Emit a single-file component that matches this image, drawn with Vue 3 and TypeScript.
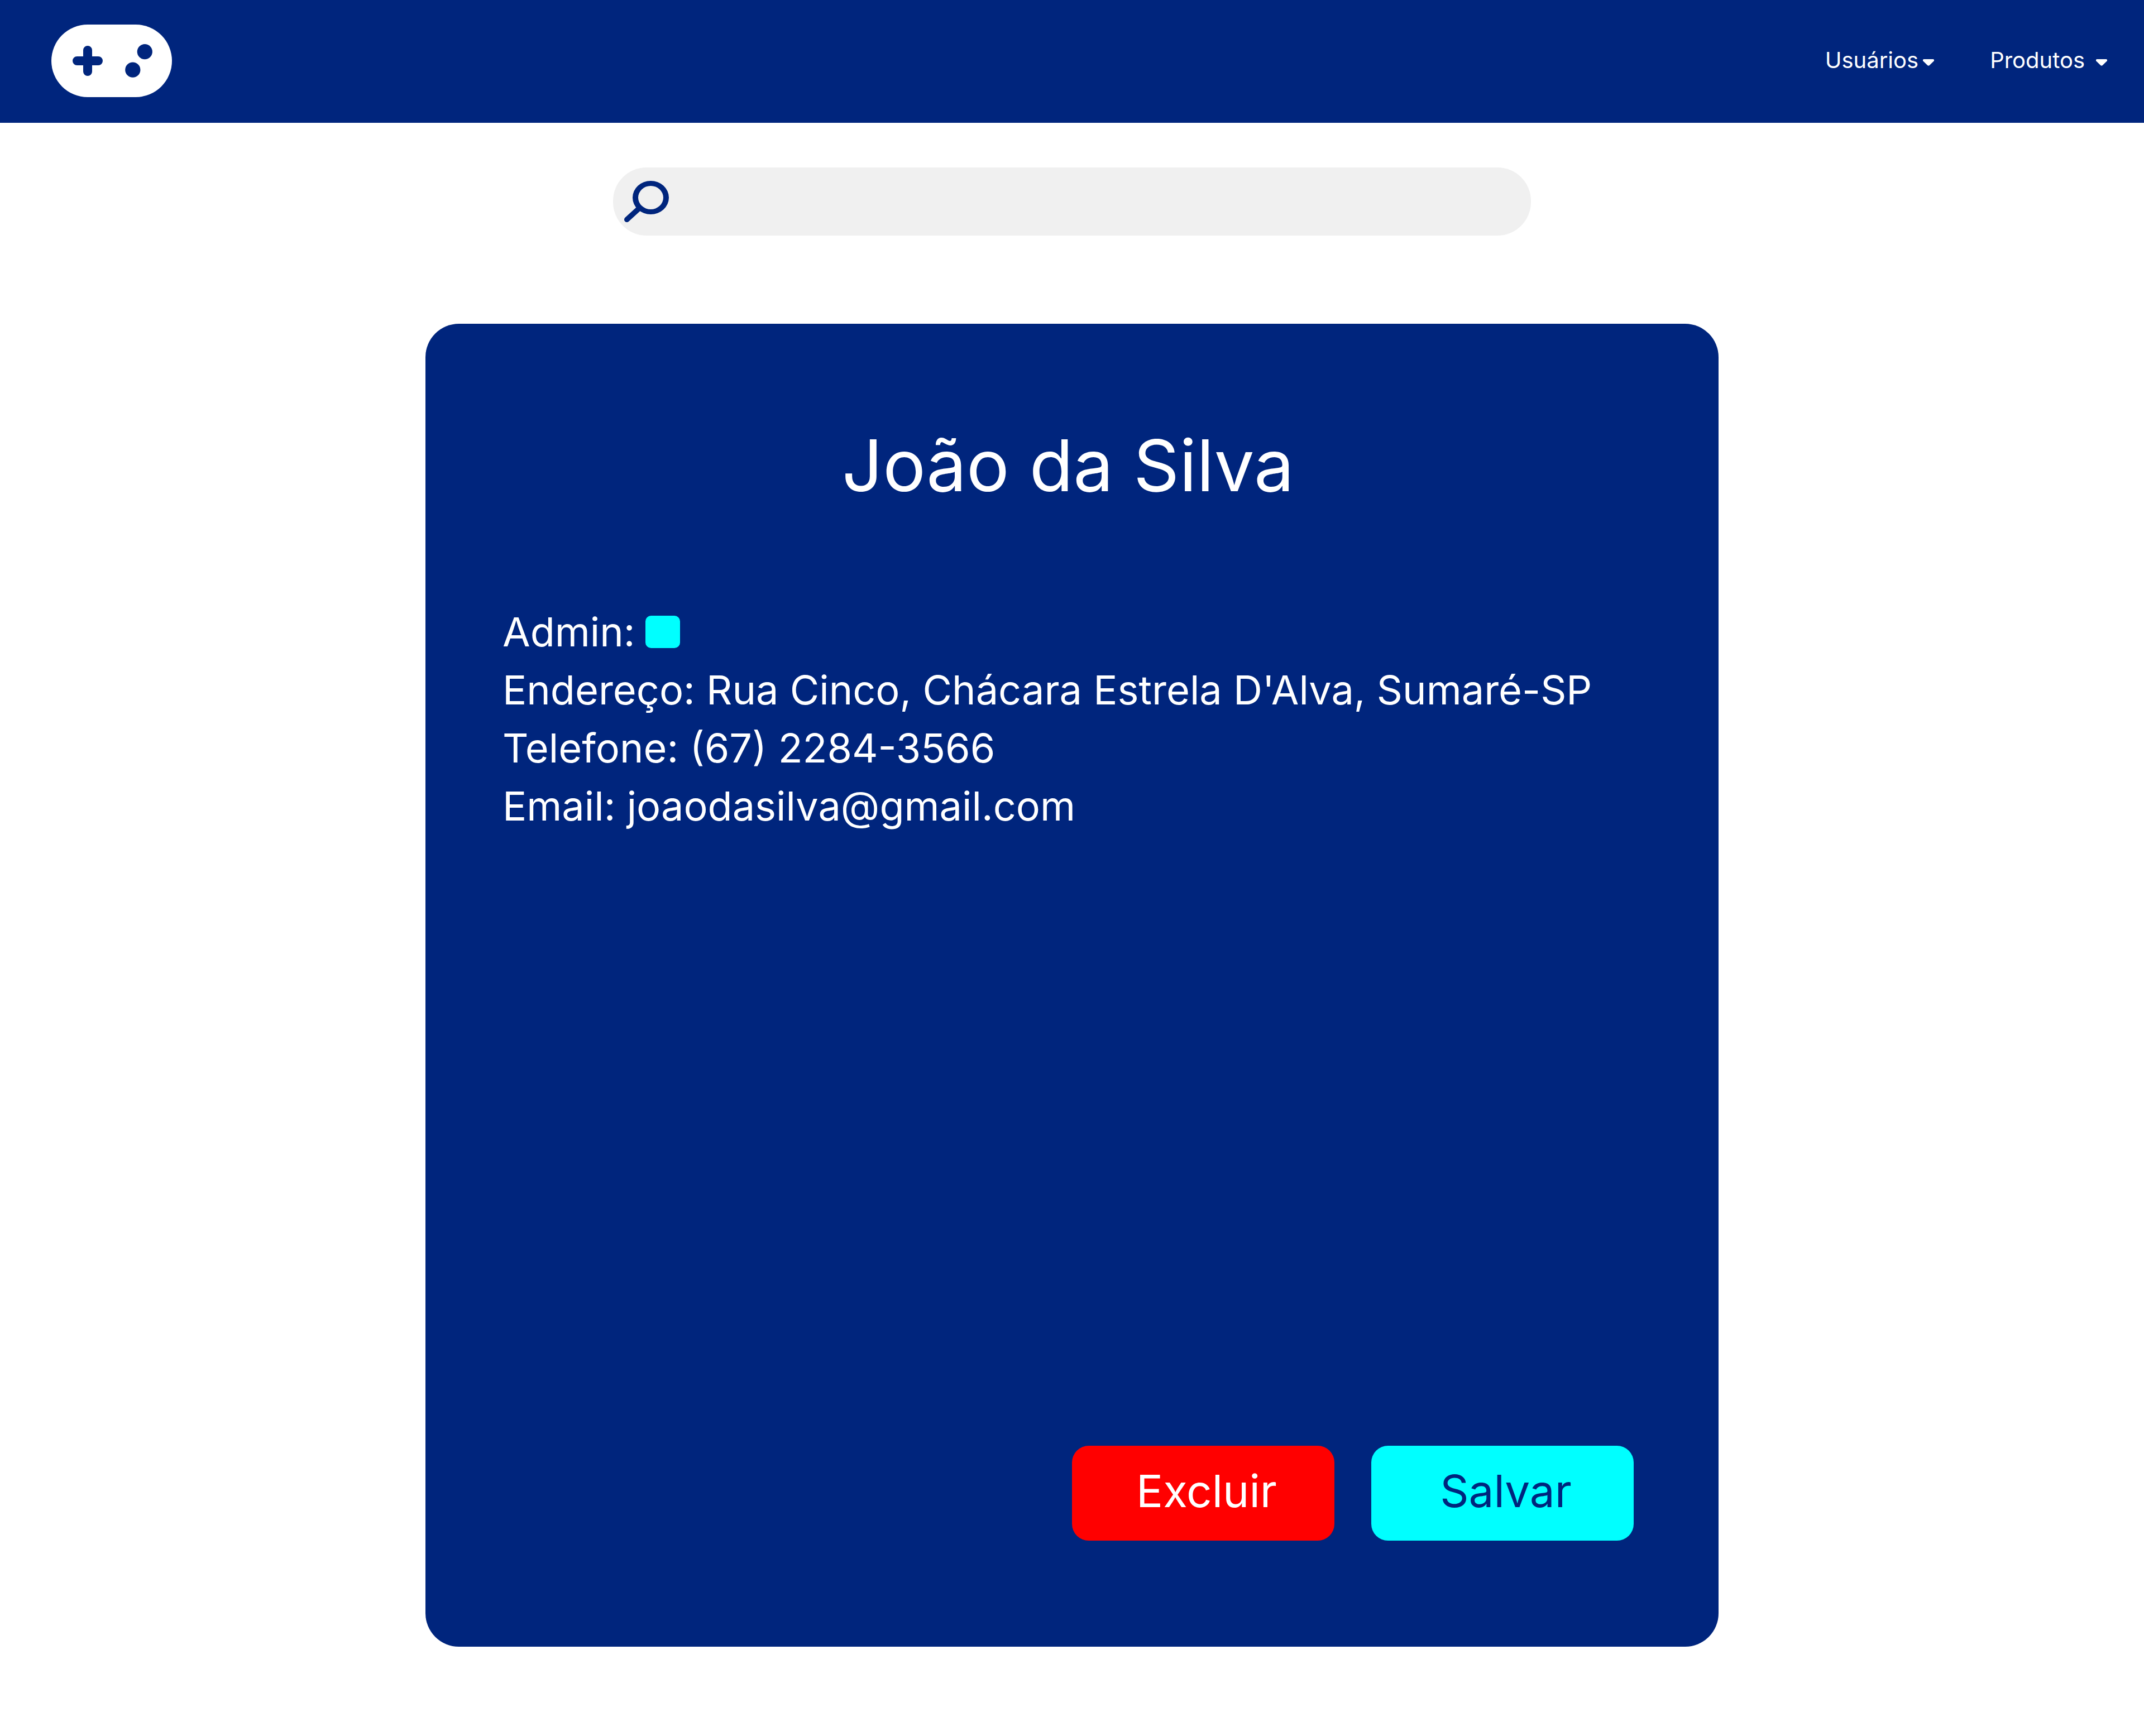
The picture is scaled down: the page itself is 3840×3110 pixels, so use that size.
<script setup lang="ts">
import { ref } from 'vue'

interface Detail {
  label: string
  value: string
}

const menus: { name: string; slug: string }[] = [
  { name: 'Usuários', slug: 'users' },
  { name: 'Produtos', slug: 'products' },
]

const details: Detail[] = [
  { label: 'Endereço', value: "Rua Cinco, Chácara Estrela D'Alva, Sumaré-SP" },
  { label: 'Telefone', value: '(67) 2284-3566' },
  { label: 'Email', value: 'joaodasilva@gmail.com' },
]

const query = ref('')
const isAdmin = ref(false)
</script>

<template>
  <div class="page">
    <header class="topbar">
      <a class="logo" href="#" aria-label="Início">
        <svg viewBox="0 0 216 130" aria-hidden="true">
          <rect width="216" height="130" rx="65" fill="#fff" />
          <path d="M46 65H84M65 46V84" stroke="#00257d" stroke-width="16" stroke-linecap="round" />
          <circle cx="167.3" cy="48.7" r="13.6" fill="#00257d" />
          <circle cx="145.8" cy="81.2" r="13.6" fill="#00257d" />
        </svg>
      </a>
      <nav class="menus">
        <button v-for="menu in menus" :key="menu.slug" type="button" class="menu" :class="menu.slug">
          <span>{{ menu.name }}</span>
          <svg class="caret" viewBox="0 0 20 12" aria-hidden="true">
            <path d="M1.6 0H18.4Q20 0 20 1.6V3L12 10.8Q10 12.8 8 10.8L0 3V1.6Q0 0 1.6 0Z" fill="#fff" />
          </svg>
        </button>
      </nav>
    </header>

    <main class="content">
      <form class="search" role="search" @submit.prevent>
        <svg class="lens" viewBox="0 0 80 74" aria-hidden="true">
          <path d="M4.8 69.3L27 49" fill="none" stroke="#00257d" stroke-width="9.6" stroke-linecap="round" />
          <path
            fill="#00257d"
            fill-rule="evenodd"
            d="M15 30A32.5 30 0 1 1 80 30A32.5 30 0 1 1 15 30ZM25 30A22.5 21 0 1 0 70 30A22.5 21 0 1 0 25 30Z"
          />
        </svg>
        <input v-model="query" class="query" type="search" aria-label="Pesquisar" />
      </form>

      <section class="card">
        <h1 class="name">João da Silva</h1>
        <div class="details">
          <div class="row">
            <label for="admin">Admin:</label>
            <input id="admin" v-model="isAdmin" class="tick" type="checkbox" />
          </div>
          <p v-for="item in details" :key="item.label" class="row">{{ item.label }}: {{ item.value }}</p>
        </div>
        <div class="actions">
          <button type="button" class="action delete">Excluir</button>
          <button type="button" class="action save">Salvar</button>
        </div>
      </section>
    </main>
  </div>
</template>

<style>
body {
  margin: 0;
  background: #fff;
}
</style>

<style scoped>
.page {
  font-family: Inter, sans-serif;
  font-weight: 400;
  color: #fff;
}

.page * {
  box-sizing: border-box;
}

button {
  border: 0;
  font-family: inherit;
  cursor: pointer;
}

.topbar {
  display: flex;
  align-items: center;
  justify-content: space-between;
  height: 220px;
  padding: 0 66px 2px 92px;
  background: #00257d;
}

.logo,
.logo svg {
  display: block;
  width: 216px;
  height: 130px;
}

.menus {
  display: flex;
  gap: 100px;
}

.menu {
  display: flex;
  align-items: center;
  padding: 0 0 2px;
  background: none;
  color: #fff;
  font-size: 40px;
  line-height: 48px;
}

.users {
  gap: 8px;
}

.products {
  gap: 20px;
}

.caret {
  display: block;
  width: 20px;
  height: 12px;
  margin-top: 8px;
}

.content {
  display: flex;
  flex-direction: column;
  align-items: center;
  padding: 80px 40px 160px;
}

.search {
  display: flex;
  align-items: center;
  gap: 20px;
  width: 100%;
  max-width: 1644px;
  height: 122px;
  padding: 0 60px 0 20px;
  border-radius: 60px;
  background: #f0f0f0;
}

.lens {
  flex: none;
  width: 80px;
  height: 74px;
}

.query {
  flex: 1;
  min-width: 0;
  height: 100%;
  padding: 0;
  border: 0;
  outline: 0;
  background: transparent;
  color: #00257d;
  font-family: inherit;
  font-size: 40px;
  appearance: none;
}

.card {
  width: 100%;
  max-width: 2316px;
  margin-top: 158px;
  padding: 176px 152px 190px 138px;
  border-radius: 60px;
  background: #00257d;
}

.name {
  margin: 0;
  font-size: 128px;
  font-weight: 400;
  line-height: 156px;
  text-align: center;
}

.details {
  margin-top: 168px;
  font-size: 72px;
  line-height: 104px;
}

.row {
  display: flex;
  align-items: center;
  gap: 18px;
  margin: 0;
}

.tick {
  width: 62px;
  height: 58px;
  margin: 0;
  border-radius: 10px;
  background: #0ff;
  appearance: none;
}

.tick:checked {
  box-shadow: inset 0 0 0 12px #fff;
}

.actions {
  display: flex;
  justify-content: flex-end;
  gap: 66px;
  margin-top: 1094px;
}

.action {
  width: 470px;
  height: 170px;
  padding: 0 0 8px 12px;
  border-radius: 30px;
  font-size: 80px;
  line-height: 96px;
}

.delete {
  background: #f00;
  color: #fff;
}

.save {
  background: #0ff;
  color: #00257d;
}
</style>
